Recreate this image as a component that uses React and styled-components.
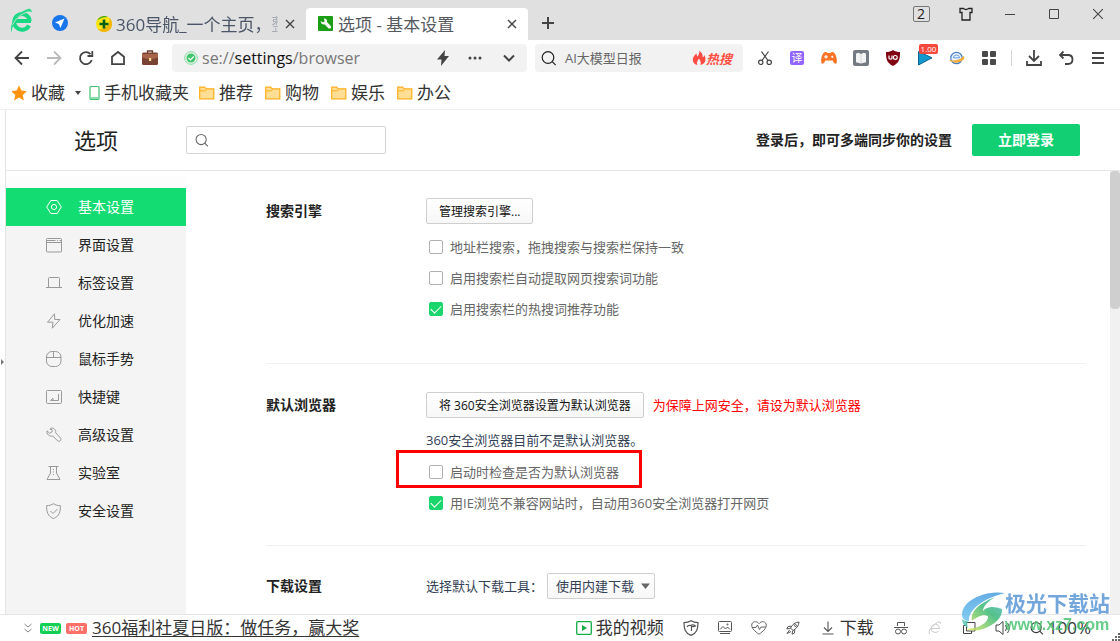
import React, { useState } from 'react';
// styling imports
import styled, { createGlobalStyle, css } from 'styled-components';

const GlobalStyle = createGlobalStyle`
  * {
    box-sizing: border-box;
  }
  body {
    margin: 0;
    background: #fff;
    color: #222;
    font-family: "Open Sans", "Noto Sans CJK SC", sans-serif;
    font-size: 13px;
    overflow: hidden;
  }
  button, input, select {
    font-family: inherit;
    margin: 0;
  }
  svg {
    display: block;
    flex: none;
  }
`;

const Window = styled.div`
  position: relative;
  display: flex;
  flex-direction: column;
  height: 100vh;
`;

/* title bar */
const TitleBar = styled.header`
  display: flex;
  align-items: flex-end;
  height: 40px;
  flex: none;
  padding-left: 10px;
  background: #e0e0e0;
`;

const PlainButton = styled.button`
  display: flex;
  align-items: center;
  justify-content: center;
  flex: none;
  width: ${props => props.$w || 32}px;
  height: ${props => props.$h || 32}px;
  padding: 0;
  border: 0;
  background: none;
  color: ${props => props.$color || '#444'};
`;

const Tab = styled.div`
  display: flex;
  align-items: center;
  flex: none;
  width: ${props => (props.$active ? 222 : 220)}px;
  height: 32px;
  padding: 0 4px 0 ${props => (props.$active ? 12 : 10)}px;
  border-radius: 4px 4px 0 0;
  background: ${props => (props.$active ? '#fff' : 'none')};
`;

const TabTitle = styled.button`
  flex: 1;
  min-width: 0;
  height: 32px;
  padding: 0 0 0 4px;
  border: 0;
  background: none;
  color: ${props => (props.$active ? '#55595f' : '#4a5568')};
  font-size: 17px;
  line-height: 34px;
  text-align: left;
  white-space: nowrap;
  overflow: hidden;
  ${props => !props.$active && css`
    mask-image: linear-gradient(90deg, #000 88%, transparent 104%);
  `}
`;

const WindowControls = styled.div`
  display: flex;
  align-items: center;
  align-self: flex-start;
  height: 28px;
  margin-left: auto;
`;

const TabCount = styled.span`
  width: 17px;
  height: 16px;
  border: 1px solid #777;
  border-radius: 2px;
  color: #222;
  font-size: 14px;
  line-height: 14px;
  text-align: center;
`;

/* address row */
const AddressRow = styled.div`
  display: flex;
  align-items: center;
  flex: none;
  height: 36px;
  padding: 0 6px;
`;

const Field = styled.div`
  display: flex;
  align-items: center;
  height: 28px;
  border-radius: 4px;
  background: #f2f2f2;
`;

const AddressField = styled(Field)`
  flex: 1;
  min-width: 0;
  margin: 0 8px 0 6px;
  padding-left: 12px;
`;

const Url = styled.a`
  flex: 1;
  min-width: 0;
  padding-left: 4px;
  color: #777;
  font-size: 16px;
  line-height: 28px;
  text-decoration: none;
  b {
    color: #111;
    font-weight: 400;
  }
`;

const SearchField = styled(Field)`
  width: 208px;
  margin-right: 6px;
  padding: 0 11px 0 6px;
  input {
    flex: 1;
    min-width: 0;
    padding: 0 0 0 8px;
    border: 0;
    outline: 0;
    background: none;
    font-size: 13px;
  }
  input::placeholder {
    color: #666;
  }
`;

const HotLink = styled.a`
  color: #ff4f43;
  font-size: 13px;
  font-style: italic;
  font-weight: 700;
  text-decoration: none;
`;

const Extension = styled(PlainButton)`
  position: relative;
`;

const PriceBadge = styled.span`
  position: absolute;
  top: 2px;
  left: 10px;
  width: 19px;
  height: 10px;
  border-radius: 2px;
  background: #f4493c;
  color: #fff;
  font-size: 8px;
  line-height: 10px;
`;

const TransIcon = styled.span`
  width: 14px;
  height: 14px;
  border-radius: 2px;
  background: #9165ff;
  color: #fff;
  font-size: 11px;
  line-height: 14px;
`;

const Separator = styled.span`
  width: 1px;
  height: 16px;
  margin: 0 6px;
  background: #d5d5d5;
`;

/* bookmarks */
const BookmarkBar = styled.nav`
  display: flex;
  align-items: center;
  gap: 10px;
  flex: none;
  height: 34px;
  padding-left: 12px;
  border-bottom: 1px solid #eee;
`;

const Bookmark = styled.a`
  display: flex;
  align-items: center;
  gap: 4px;
  margin-right: ${props => (props.$folder ? 2 : 0)}px;
  color: #333;
  font-size: 17px;
  line-height: 32px;
  text-decoration: none;
`;

/* settings page */
const Page = styled.div`
  display: flex;
  flex: 1;
  min-height: 0;
`;

const Gutter = styled.div`
  display: flex;
  align-items: center;
  width: 6px;
  border-right: 1px solid #e4e4e4;
`;

const Settings = styled.div`
  display: flex;
  flex-direction: column;
  flex: 1;
  min-width: 0;
`;

const SettingsHeader = styled.div`
  display: flex;
  align-items: center;
  flex: none;
  height: 61px;
  padding: 0 40px 0 68px;
  border-bottom: 1px solid #e6e6e6;
  h1 {
    width: 112px;
    margin: 0;
    font-size: 22px;
    font-weight: 400;
    line-height: 30px;
  }
`;

const SettingsSearch = styled.label`
  display: flex;
  align-items: center;
  width: 200px;
  height: 28px;
  padding-left: 8px;
  border: 1px solid #d4d4d4;
  border-radius: 2px;
  color: #666;
  input {
    flex: 1;
    min-width: 0;
    border: 0;
    outline: 0;
    background: none;
  }
`;

const LoginHint = styled.strong`
  margin: 0 20px 0 auto;
  font-size: 14px;
  line-height: 18px;
`;

const LoginButton = styled.button`
  width: 108px;
  height: 32px;
  padding: 0;
  border: 0;
  border-radius: 2px;
  background: #11cf72;
  color: #fff;
  font-size: 14px;
  font-weight: 700;
  line-height: 18px;
`;

const Columns = styled.div`
  display: flex;
  flex: 1;
  min-height: 0;
`;

const Sidebar = styled.nav`
  flex: none;
  width: 180px;
  padding-top: 17px;
  background: linear-gradient(#fff, #f4f4f4 40px);
`;

const SideItem = styled.a`
  display: flex;
  align-items: center;
  gap: 15px;
  height: 38px;
  padding: 0 0 2px 39px;
  background: ${props => (props.$active ? '#13dc72' : 'none')};
  color: ${props => (props.$active ? '#fff' : '#222')};
  font-size: 14px;
  text-decoration: none;
  svg {
    color: ${props => (props.$active ? '#fff' : '#999')};
  }
`;

const Content = styled.main`
  flex: 1;
  min-width: 0;
  padding: 0 24px 0 80px;
  overflow: hidden;
`;

const ScrollTrack = styled.div`
  width: 10px;
  background: #f1f1f1;
`;

const ScrollThumb = styled.div`
  height: 138px;
  border-radius: 4px;
  background: #cfcfcf;
`;

const Section = styled.section`
  display: grid;
  grid-template-columns: 160px 1fr;
  padding: ${props => props.$pad};
  border-bottom: 1px solid #f0f0f0;
  h2 {
    margin: 0;
    font-size: 14px;
    line-height: 26px;
  }
`;

const ControlLine = styled.div`
  display: flex;
  align-items: center;
  gap: ${props => props.$gap || 9}px;
  height: 26px;
  margin-bottom: 7px;
`;

const GreyButton = styled.button`
  height: 26px;
  padding: 0 12px;
  border: 1px solid #cfcfcf;
  border-radius: 2px;
  background: linear-gradient(#fff, #f7f7f7);
  color: #111;
  font-size: 12px;
`;

const Warning = styled.span`
  color: #f00;
  font-size: 13px;
  line-height: 16px;
`;

const Note = styled.p`
  margin: 0;
  color: #333f55;
  font-size: 13px;
  line-height: 31px;
`;

const OptionLine = styled.div`
  display: flex;
  height: 31px;
`;

const Option = styled.label`
  position: relative;
  display: flex;
  align-items: center;
  gap: 7px;
  padding-left: 3px;
  color: #666;
  font-size: 13px;
  ${props => props.$marked && css`
    &::after {
      content: "";
      position: absolute;
      inset: -6px -23px -1px -30px;
      border: 3px solid #f00;
    }
  `}
`;

const Check = styled.input`
  appearance: none;
  display: flex;
  justify-content: center;
  width: 14px;
  height: 14px;
  border: 1px solid #b0b0b0;
  border-radius: 2px;
  background: #fff;
  &:checked {
    border-color: #1bd66c;
    background: #1bd66c;
  }
  &:checked::after {
    content: "";
    width: 5px;
    height: 9px;
    border: solid #fff;
    border-width: 0 1px 1px 0;
    transform: rotate(45deg);
  }
`;

const SelectBox = styled.span`
  display: grid;
  align-items: center;
  select, svg {
    grid-area: 1 / 1;
  }
  select {
    appearance: none;
    width: 108px;
    height: 26px;
    padding: 0 0 0 8px;
    border: 1px solid #cfcfcf;
    border-radius: 2px;
    background: linear-gradient(#fff, #f7f7f7);
    color: #333f55;
    font-size: 13px;
  }
  svg {
    justify-self: end;
    margin-right: 5px;
    pointer-events: none;
  }
`;

const SelectLabel = styled.label`
  color: #333f55;
  font-size: 13px;
  line-height: 16px;
`;

/* status bar */
const StatusBar = styled.footer`
  display: flex;
  align-items: center;
  flex: none;
  height: 27px;
  padding: 0 29px 0 16px;
  border-top: 1px solid #e6e6e6;
  color: #333;
  font-size: 17px;
  line-height: 26px;
`;

const Pill = styled.span`
  width: 21px;
  height: 11px;
  margin-right: 5px;
  border-radius: 2px;
  background: ${props => props.$bg};
  color: #fff;
  font-size: 7px;
  font-weight: 700;
  line-height: 11px;
  text-align: center;
`;

const NewsLink = styled.a`
  color: #333;
  text-underline-offset: 2px;
  white-space: nowrap;
`;

const StatusTools = styled.div`
  display: flex;
  align-items: center;
  gap: 10px;
  margin-left: auto;
`;

const StatusGroup = styled.div`
  display: flex;
`;

const StatusText = styled.button`
  display: flex;
  align-items: center;
  gap: 4px;
  height: 26px;
  padding: 0;
  border: 0;
  background: none;
  color: #333;
  font-size: 17px;
  line-height: 26px;
  white-space: nowrap;
`;

const Grip = styled.svg`
  position: absolute;
  right: 0;
  bottom: 0;
`;

const Watermark = styled.div`
  position: absolute;
  right: 10px;
  bottom: 8px;
  display: flex;
  align-items: center;
  opacity: 0.85;
  pointer-events: none;
`;

const WatermarkText = styled.div`
  color: #5b98d6;
  font-size: 21px;
  font-weight: 700;
  line-height: 25px;
  small {
    display: block;
    color: #4cc474;
    font-family: "Liberation Sans", sans-serif;
    font-size: 16px;
    line-height: 17px;
  }
`;

// line icon used all over the window
const Line = ({ d, s = 16, w = 1, box = 16, children, ...rest }) => (
  <svg width={s} height={s} viewBox={`0 0 ${box} ${box}`} fill="none" stroke="currentColor" strokeWidth={w} {...rest}>
    {d && <path d={d} />}
    {children}
  </svg>
);

const CloseIcon = ({ s = 10, w = 1.4 }) => <Line s={s} box={10} w={w} d="M1 1l8 8M9 1l-8 8" />;

const SearchIcon = ({ s = 16 }) => (
  <Line s={s} w={1.2}><circle cx="7" cy="7.500" r="5.800" /><path d="M11.200 11.700L14.700 15.200" /></Line>
);

const BrowserLogo = () => (
  <svg width="24" height="26" viewBox="0 0 24 26" fill="none">
    <path d="M21 13H5.500M19.800 13a7.800 7.800 0 1 0-.8 4.500" stroke="#18d884" strokeWidth="4" />
    <path d="M1.500 24.500C-1.500 16 7 4 18 1c2.500-.6 4 .7 3.600 3.500C20 2.500 17 3.500 14 5 7 9 2.500 16 1.500 24.500z" fill="#28dc8b" />
    <path d="M2.500 17c3.500-7 9-11 15-13" stroke="#e0e0e0" strokeWidth=".8" />
  </svg>
);

const FolderIcon = () => (
  <svg width="16" height="14" viewBox="0 0 16 14">
    <path d="M.7 12.800V1.200h5l1.500 1.600h7.600v10z" fill="#ffdf94" stroke="#ffae1c" strokeWidth="1.200" />
    <path d="M1 4.800h5.500l1.200-1" fill="none" stroke="#ffae1c" />
  </svg>
);

const sideItems = [
  ['基本设置', <><path d="M4.800 1.500h6.400L15.300 8l-4.100 6.500H4.800L.7 8z" /><circle cx="8" cy="8" r="2.600" /></>],
  ['界面设置', <><rect x=".5" y="1.500" width="15" height="13.500" rx="1" /><path d="M1 3.500h8.500M11 3.500h1M13.500 3.500h1.500M1 5.500h14" /></>],
  ['标签设置', <path d="M2.500 12.500V3.500q0-1 1-1h9q1 0 1 1v9M0 12.500h16" />],
  ['优化加速', <path d="M8.500.8L1.500 9.200H7L6.300 15.200 14 6.500H8.700z" />],
  ['鼠标手势', <><rect x=".5" y=".5" width="14.500" height="15" rx="5.500" /><path d="M.5 6.500H15M7.500.5v6" /></>],
  ['快捷键', <><rect x=".5" y="1.500" width="15" height="13" rx="1" /><path d="M12.500 5v6.500h-8l2.500-2.300v2.300" /></>],
  ['高级设置', <path d="M4.600 1.300c3-1 5.600 1.300 5 4.400l5 5.400c1.200 2-1 4-3 2.700L6.800 9C3.500 10 .2 7 1 3.800l2.700 2.500 2.500-1.500-.2-2.200-2-.3z" />],
  ['实验室', <><path d="M2.500 1.500h10M4.500 2v6L1 14.500h13L10.500 8V2" /><path d="M7.500 4v7" strokeDasharray="1 1.500" /></>],
  ['安全设置', <><path d="M7.500.7C5.500 2 3 2.700.6 2.700c0 6 .9 10.500 6.900 12.800 6-2.300 6.900-6.800 6.900-12.800-2.400 0-4.900-.7-6.900-2z" /><path d="M4.500 8l2.500 2.500 4.500-4.500" /></>],
];

const CheckOption = ({ label, on, marked }) => {
  const [checked, setChecked] = useState(!!on);
  return (
    <OptionLine>
      <Option $marked={marked}>
        <Check type="checkbox" checked={checked} onChange={() => setChecked(!checked)} />
        {label}
      </Option>
    </OptionLine>
  );
};

const Titles = () => (
  <TitleBar>
    <PlainButton $w={24} $h={38} aria-label="360"><BrowserLogo /></PlainButton>
    <PlainButton $w={52} $h={34} aria-label="send">
      <svg width="16" height="16" viewBox="0 0 16 16">
        <circle cx="8" cy="8" r="8" fill="#1976ea" />
        <path d="M12.500 3.500L3 7.500l3.800 1.600L8.500 13z" fill="#fff" />
      </svg>
    </PlainButton>
    <Tab>
      <svg width="16" height="16" viewBox="0 0 16 16">
        <circle cx="8" cy="8" r="8" fill="#ffe514" />
        <path d="M2 13.200A8 8 0 0 0 16 8c0-3-1-5-3-6.300C15 7 12 13 2 13.200z" fill="#f3b60c" />
        <path d="M1 4.500A8 8 0 0 1 12 1C8 1 4 2 1 4.500z" fill="#3ba51b" />
        <path d="M8 3.500v9M3.500 8h9" stroke="#075f18" strokeWidth="2.600" />
      </svg>
      <TabTitle>360导航_一个主页，整个世界</TabTitle>
      <PlainButton $w={24} aria-label="close"><CloseIcon /></PlainButton>
    </Tab>
    <Tab $active>
      <svg width="16" height="16" viewBox="0 0 16 16">
        <rect width="15" height="15" rx="1" fill="#1b9e15" />
        <path d="M5.800 2.600C8 2.300 9.500 4 9 6l4 4.200c.6 1.600-.8 2.900-2.400 2.200L6.800 8.500C4.500 9 2.600 7.300 2.700 5l2.200 1.600 1.700-1.400z" fill="#fff" />
      </svg>
      <TabTitle $active>选项 - 基本设置</TabTitle>
      <PlainButton $w={24} aria-label="close"><CloseIcon /></PlainButton>
    </Tab>
    <PlainButton $w={40} $h={34} aria-label="new tab"><Line s={14} box={14} w={2} d="M7 1v12M1 7h12" /></PlainButton>
    <WindowControls>
      <PlainButton $w={46} $h={28}><TabCount>2</TabCount></PlainButton>
      <PlainButton $w={44} $h={28} $color="#222" aria-label="skin">
        <Line s={14} box={14} w={1.3} d="M1 1.500h3.500q2.500 2 5 0H13v4h-2V13H3V5.500H1z" />
      </PlainButton>
      <PlainButton $w={44} $h={28} aria-label="minimize"><Line s={10} box={10} d="M0 5.500h10" /></PlainButton>
      <PlainButton $w={44} $h={28} aria-label="maximize"><Line s={10} box={10} d="M.5.500h9v9h-9z" /></PlainButton>
      <PlainButton $w={44} $h={28} aria-label="close window"><CloseIcon s={12} w={0.9} /></PlainButton>
    </WindowControls>
  </TitleBar>
);

const Address = () => (
  <AddressRow>
    <PlainButton aria-label="back"><Line w={1.8} d="M15 8H1.500M8 1.500L1.500 8 8 14.500" /></PlainButton>
    <PlainButton aria-label="forward" $color="#bbb"><Line w={1.8} d="M1 8h13.500M8 1.500L14.500 8 8 14.500" /></PlainButton>
    <PlainButton aria-label="reload"><Line w={1.8} d="M13.700 10A6 6 0 1 1 12.500 4.200M14.300 1v5H9.500" /></PlainButton>
    <PlainButton aria-label="home"><Line w={1.8} d="M2 14.200V6.800L8 2l6 4.800v7.400z" /></PlainButton>
    <PlainButton aria-label="toolbox">
      <svg width="16" height="16" viewBox="0 0 16 16">
        <path d="M5.500 3V1h5v2" fill="none" stroke="#6d3c2c" strokeWidth="1.300" />
        <rect y="2.500" width="16" height="12.500" rx="1.500" fill="#794333" />
        <path d="M0 4h16v3.500q-8 3-16 0z" fill="#a8644a" />
        <rect x="7" y="8" width="2.200" height="3" fill="#ffdc91" />
      </svg>
    </PlainButton>
    <AddressField>
      <svg width="14" height="14" viewBox="0 0 14 14" fill="none">
        <circle cx="7" cy="7" r="6.300" stroke="#7ddc9c" />
        <circle cx="7" cy="7" r="4.500" fill="#3fc66d" />
        <path d="M4.500 7l2 2 3.200-3.500" stroke="#fff" strokeWidth="1.200" />
      </svg>
      <Url href="#settings">se://<b>settings</b>/browser</Url>
      <PlainButton aria-label="speed mode">
        <svg width="14" height="16" viewBox="0 0 14 16"><path d="M9 0L1 9.500h4.500L5 16l8-10H8.500z" fill="#444" /></svg>
      </PlainButton>
      <PlainButton aria-label="more">
        <svg width="14" height="4" viewBox="0 0 14 4" fill="#444"><circle cx="2" cy="2" r="1.500" /><circle cx="7" cy="2" r="1.500" /><circle cx="12" cy="2" r="1.500" /></svg>
      </PlainButton>
      <PlainButton $w={36} aria-label="history"><Line s={12} box={12} w={2} d="M1 3.500l5 5 5-5" /></PlainButton>
    </AddressField>
    <SearchField>
      <SearchIcon />
      <input aria-label="搜索" placeholder="AI大模型日报" />
      <svg width="14" height="16" viewBox="0 0 14 16">
        <path d="M7.300.8c.5 3-1.500 4-1.200 6C4.500 6 4.600 4 4.600 3.500 2.500 5 .5 7.500.8 10.200 1 13 3 14.500 5.500 15 4 12 6 11 6.800 8.500 8 10 9.500 12 8.500 15c4-.8 5.500-4 4.800-7.500-.3-1.500-1-2.500-1-2.500-.2 1.500-.8 2-1.600 2.300C11 4.500 9.500 2 7.300.8z" fill="#ff4c42" />
      </svg>
      <HotLink href="#hot">热搜</HotLink>
    </SearchField>
    <Extension aria-label="screenshot">
      <Line w={1.2}><path d="M4.500 1.500l6.500 9M11.500 1.500l-6.500 9" /><circle cx="3.800" cy="12.300" r="2.200" /><circle cx="12.200" cy="12.300" r="2.200" /></Line>
    </Extension>
    <Extension><TransIcon>译</TransIcon></Extension>
    <Extension aria-label="games">
      <svg width="16" height="14" viewBox="0 0 16 14">
        <path d="M4 1h1.500l1 1h3l1-1H12c3 1 4.500 8 3.600 11-1 1.800-3 0-4-2.500H4.400C3.400 12 1.400 13.800.4 12-.5 9 1 2 4 1z" fill="#fb7426" />
        <path d="M5 4v3.500M3.200 5.800h3.600" stroke="#fff" strokeWidth="1.200" />
        <circle cx="11.300" cy="5.800" r="1.100" fill="#fff" />
      </svg>
    </Extension>
    <Extension aria-label="reader">
      <svg width="16" height="16" viewBox="0 0 16 16">
        <rect width="16" height="16" rx="2" fill="#747a82" />
        <path d="M3 3.500l2.500-.8L8 4l2.500-1.300 2.500.8v8.700L8 13.500l-5-1.300z" fill="#f2f3f4" />
        <path d="M8 4.500v8.500" stroke="#d5d8db" />
      </svg>
    </Extension>
    <Extension aria-label="blocker">
      <svg width="16" height="16" viewBox="0 0 16 16">
        <path d="M8 0c2 1.500 4.500 2 7 2 0 7-.5 10.500-7 14C1.500 12.500 1 9 1 2c2.500 0 5-.5 7-2z" fill="#800012" />
        <path d="M4 5.500v2.800q1.500 1.800 3 0V5.500" fill="none" stroke="#fff" strokeWidth="1.200" />
        <circle cx="10.300" cy="7.400" r="1.900" fill="none" stroke="#fff" strokeWidth="1.200" />
      </svg>
    </Extension>
    <Extension aria-label="video speed">
      <svg width="16" height="16" viewBox="0 0 16 16"><path d="M1.500 1.500v13.500L15 7.800z" fill="#1297cf" stroke="#0a648e" /></svg>
      <PriceBadge>1.00</PriceBadge>
    </Extension>
    <Extension aria-label="ie">
      <svg width="16" height="14" viewBox="0 0 16 14" fill="none">
        <circle cx="7.500" cy="7" r="5.700" fill="#e9f2fd" stroke="#4b80c8" strokeWidth="1.200" />
        <path d="M4.500 6.800q0-2.800 3-2.800t3 2.800z" stroke="#6c9ddd" />
        <path d="M.6 9.300c4 1.800 11 .3 14-3.300 1.500 2.500-5 5.500-10 5" stroke="#f2ad34" strokeWidth="1.200" />
      </svg>
    </Extension>
    <Extension aria-label="apps">
      <svg width="14" height="14" viewBox="0 0 14 14" fill="#4a4a4a">
        <rect width="6" height="6" rx="1" /><rect x="8" width="6" height="6" rx="1" />
        <rect y="8" width="6" height="6" rx="1" /><rect x="8" y="8" width="6" height="6" rx="1" />
      </svg>
    </Extension>
    <Separator />
    <PlainButton aria-label="downloads"><Line w={1.8} d="M8 0v10.500M3 6l5 5 5-5M1 11v4h14v-4" /></PlainButton>
    <PlainButton aria-label="undo"><Line w={1.8} d="M5.500 1.500L2 5l3.500 3.500M2 5h8q4.500 0 4.500 4.500T10 14H7" /></PlainButton>
    <PlainButton aria-label="menu"><Line s={14} box={14} w={2} d="M1 2h12M1 7h12M1 12h12" /></PlainButton>
  </AddressRow>
);

const Bookmarks = () => (
  <BookmarkBar>
    <Bookmark href="#fav">
      <svg width="15" height="16" viewBox="1 0 15 16"><path d="M8 .5l2.300 5.100 5.500.6-4.100 3.700 1.200 5.500L8 12.600l-4.900 2.800 1.200-5.500L.2 6.200l5.500-.6z" fill="#ff930f" /></svg>
      收藏
    </Bookmark>
    <Bookmark href="#phone">
      <svg width="6" height="4" viewBox="0 0 6 4"><path d="M0 0h6L3 4z" fill="#444" /></svg>
      <svg width="15" height="16" viewBox="0 0 15 16" fill="none">
        <rect x="5" y="1.500" width="9" height="13" rx="1" stroke="#3cc071" strokeWidth="1.200" />
        <path d="M5.500 12h8v2h-8z" fill="#8edcae" />
      </svg>
      手机收藏夹
    </Bookmark>
    {['推荐', '购物', '娱乐', '办公'].map(name => (
      <Bookmark href="#folder" key={name} $folder><FolderIcon />{name}</Bookmark>
    ))}
  </BookmarkBar>
);

const Status = () => (
  <StatusBar>
    <PlainButton $w={24} $h={26} $color="#888" aria-label="expand news">
      <Line s={12} box={12} d="M2.500 2L6 5l3.500-3M2.500 7L6 10l3.500-3" />
    </PlainButton>
    <Pill $bg="#13cf54">NEW</Pill>
    <Pill $bg="#fb7069">HOT</Pill>
    <NewsLink href="#news">360福利社夏日版：做任务，赢大奖</NewsLink>
    <StatusTools>
      <StatusText>
        <svg width="16" height="14" viewBox="0 0 16 14" fill="none">
          <rect x=".7" y=".7" width="14.600" height="12.600" rx="1" stroke="#12ad48" strokeWidth="1.300" />
          <path d="M6 4l5 3-5 3z" fill="#12ad48" />
        </svg>
        我的视频
      </StatusText>
      <StatusGroup>
        <PlainButton $w={34} $h={26} $color="#555" aria-label="guard">
          <Line w={1.2} d="M8 .8C6 2 3.500 2.600 1 2.600 1 9 2 13 8 15.400 14 13 15 9 15 2.600 12.500 2.600 10 2 8 .8zM4 7q1-2 3.500-1.500Q10 4 12.500 6q-2 1-4 .3V11" />
        </PlainButton>
        <PlainButton $w={34} $h={26} $color="#555" aria-label="pictures">
          <Line s={14} box={14}><rect x=".5" y=".5" width="13" height="10" rx="1" /><path d="M2 8.500l3-3 2.500 2.500 2-2 2.500 2.500M2 12.500h10" /><circle cx="9.500" cy="3.500" r=".6" /></Line>
        </PlainButton>
        <PlainButton $w={34} $h={26} $color="#666" aria-label="doctor">
          <Line><path d="M8 14.200C4 11.500.7 8.500.7 5.200.7 1.500 5.500.3 8 3.700 10.500.3 15.300 1.500 15.300 5.200c0 3.300-3.300 6.300-7.300 9z" /><path d="M1 7.500h4l1.500-2.500 2 4.500L10 7h5" /></Line>
        </PlainButton>
        <PlainButton $w={34} $h={26} $color="#555" aria-label="boost">
          <Line s={14} box={14}><path d="M13 1C9 1.300 6.500 3.500 4.500 7L7 9.500C10.500 7.500 12.700 5 13 1zM5.500 5.200L2 5.500.8 8l3.700-.8M8.800 8.500L8.500 12 6 13.200l.8-3.700M3.500 9L1 12.500 5 10.500" /><circle cx="9.500" cy="4.500" r="1" /></Line>
        </PlainButton>
      </StatusGroup>
      <StatusText>
        <Line color="#555" d="M8 1.500v10M4 7.500l4 4 4-4M2.500 14h11" w={1.1} />
        下载
      </StatusText>
      <StatusGroup>
        <PlainButton $w={34} $h={26} $color="#555" aria-label="private window">
          <Line s={14} box={14}><path d="M3.500 5V1.500h7V5M0 6.500h14" /><circle cx="4" cy="10.500" r="2.500" /><circle cx="10" cy="10.500" r="2.500" /></Line>
        </PlainButton>
        <PlainButton $w={34} $h={26} $color="#ccc" aria-label="core">
          <Line s={14} box={14} d="M3 7.500h8.500q0-4-4-4.500-4 .5-4.500 4.500.5 4 4 4 3 0 4-2M1.500 13Q-1 8 10 1q3-1 2.500 2" />
        </PlainButton>
        <PlainButton $w={34} $h={26} aria-label="windows">
          <Line s={14} box={14} d="M4.500 1.500h8.500v8.500H4.500zM4.500 4.500h-3v8h8v-2.500" />
        </PlainButton>
        <PlainButton $w={34} $h={26} aria-label="sound">
          <Line d="M1 5h3l4-3.500v13L4 11H1zM10.500 5q2 3 0 6M12.500 3q3.500 5 0 10" />
        </PlainButton>
      </StatusGroup>
      <StatusText><SearchIcon s={14} />100%</StatusText>
    </StatusTools>
  </StatusBar>
);

const App = () => {
  const [current, setCurrent] = useState('基本设置');
  return (
    <Window>
      <GlobalStyle />
      <Titles />
      <Address />
      <Bookmarks />
      <Page>
        <Gutter>
          <svg width="4" height="6" viewBox="0 0 4 6"><path d="M1 0v6l3-3z" fill="#777" /></svg>
        </Gutter>
        <Settings>
          <SettingsHeader>
            <h1>选项</h1>
            <SettingsSearch>
              <SearchIcon s={14} />
              <input type="text" aria-label="搜索设置" />
            </SettingsSearch>
            <LoginHint>登录后，即可多端同步你的设置</LoginHint>
            <LoginButton>立即登录</LoginButton>
          </SettingsHeader>
          <Columns>
            <Sidebar>
              {sideItems.map(([name, icon]) => (
                <SideItem key={name} href="#settings" $active={name === current} onClick={() => setCurrent(name)}>
                  <Line s={18} box={18}><g transform="translate(1 2)">{icon}</g></Line>
                  {name}
                </SideItem>
              ))}
            </Sidebar>
            <Content>
              <Section $pad="27px 0 39px">
                <h2>搜索引擎</h2>
                <div>
                  <ControlLine><GreyButton>管理搜索引擎...</GreyButton></ControlLine>
                  <CheckOption label="地址栏搜索，拖拽搜索与搜索栏保持一致" />
                  <CheckOption label="启用搜索栏自动提取网页搜索词功能" />
                  <CheckOption label="启用搜索栏的热搜词推荐功能" on />
                </div>
              </Section>
              <Section $pad="28px 0 27px">
                <h2>默认浏览器</h2>
                <div>
                  <ControlLine>
                    <GreyButton>将 360安全浏览器设置为默认浏览器</GreyButton>
                    <Warning>为保障上网安全，请设为默认浏览器</Warning>
                  </ControlLine>
                  <Note>360安全浏览器目前不是默认浏览器。</Note>
                  <CheckOption label="启动时检查是否为默认浏览器" marked />
                  <CheckOption label="用IE浏览不兼容网站时，自动用360安全浏览器打开网页" on />
                </div>
              </Section>
              <Section $pad="27px 0">
                <h2>下载设置</h2>
                <ControlLine $gap={4}>
                  <SelectLabel htmlFor="tool">选择默认下载工具：</SelectLabel>
                  <SelectBox>
                    <select id="tool"><option>使用内建下载</option></select>
                    <svg width="9" height="6" viewBox="0 0 9 6"><path d="M0 .5h9L4.500 6z" fill="#666" /></svg>
                  </SelectBox>
                </ControlLine>
              </Section>
            </Content>
            <ScrollTrack><ScrollThumb /></ScrollTrack>
          </Columns>
        </Settings>
      </Page>
      <Status />
      <Grip width="8" height="8" viewBox="0 0 8 8" fill="#666">
        <path d="M6 0h2v2H6zM6 3h2v2H6zM6 6h2v2H6zM3 3h2v2H3zM3 6h2v2H3zM0 6h2v2H0z" />
      </Grip>
      <Watermark>
        <svg width="44" height="42" viewBox="0 0 44 42">
          <defs>
            <linearGradient id="wing" x1="0" y1="0" x2="0" y2="1">
              <stop offset="0" stopColor="#4a9fe0" /><stop offset="1" stopColor="#6ec4f0" />
            </linearGradient>
            <linearGradient id="tail" x1="0" y1="1" x2="1" y2="0">
              <stop offset="0" stopColor="#e2e95e" /><stop offset=".6" stopColor="#39b878" /><stop offset="1" stopColor="#58b9c8" />
            </linearGradient>
          </defs>
          <path d="M44 2C26-1 2 8 1 23c0 4 2 7 7 7C7 20 20 8 44 2z" fill="url(#wing)" />
          <path d="M11 30C9 20 19 12 34 6c-7 5-12 9-12 14 4-5 11-5 19-2 1 8-7 16-19 20-6 2-12 2-17 0 9 0 20-4 22-11 1-4-8-4-16 3z" fill="url(#tail)" />
          <path d="M1 28c0 4 2 7 6 9-1-3-1-5 0-7-3 0-5-1-6-2z" fill="#5ec8b4" />
        </svg>
        <WatermarkText>极光下载站<small>www.xz7.com</small></WatermarkText>
      </Watermark>
    </Window>
  );
};

export default App;
